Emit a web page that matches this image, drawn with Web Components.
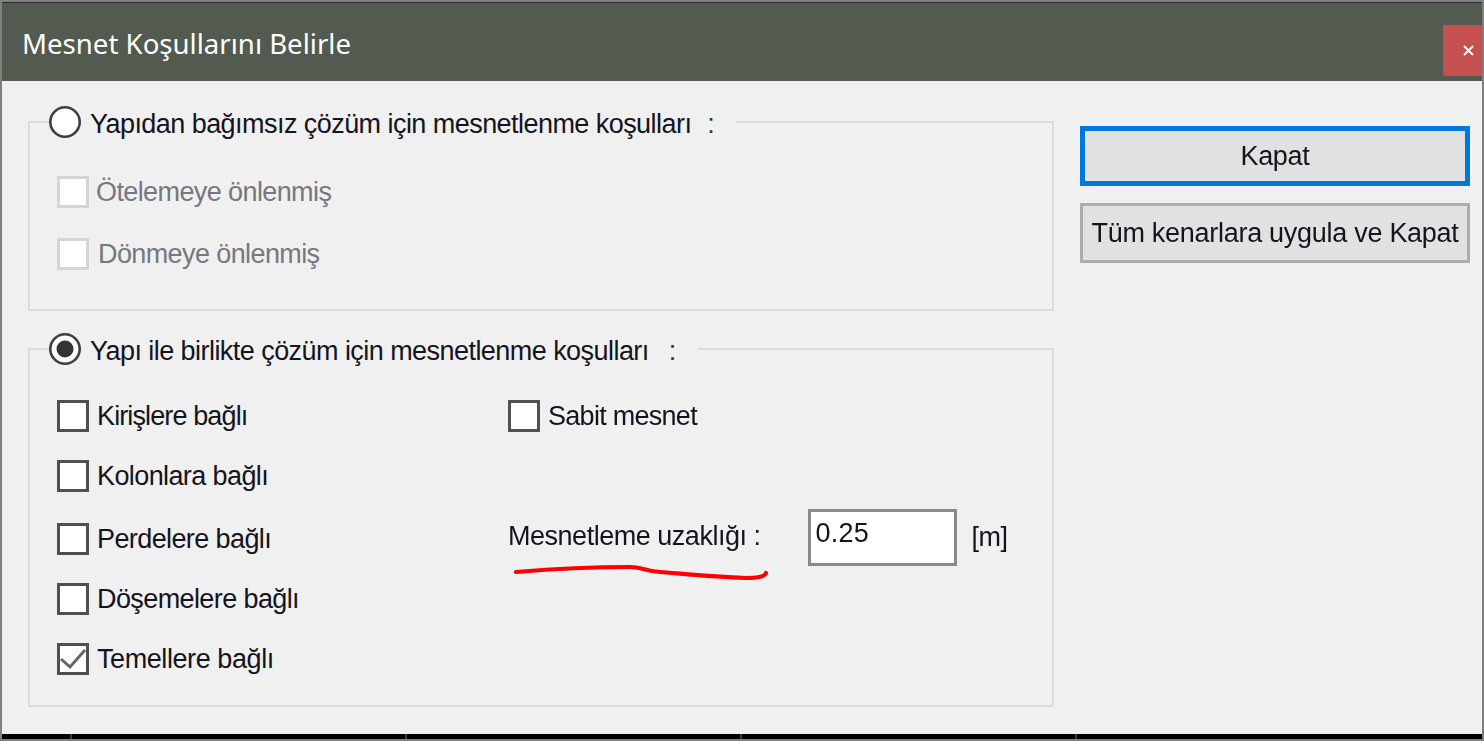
<!DOCTYPE html>
<html lang="tr">
<head>
<meta charset="utf-8">
<title>Mesnet Koşulları</title>
<style>
  html, body { margin: 0; height: 100%; background: #808080; overflow: hidden; }
</style>
</head>
<body>
<app-window>
  <span slot="title">Mesnet Koşullarını Belirle</span>

  <support-group slot="groups" label="Yapıdan bağımsız çözüm için mesnetlenme koşulları" colon-gap="16">
    <div style="display:flex;flex-direction:column;gap:30px;padding:38px 0 39px 0">
      <check-box disabled style="--gap:7px">Ötelemeye önlenmiş</check-box>
      <check-box disabled style="--gap:9px">Dönmeye önlenmiş</check-box>
    </div>
  </support-group>

  <support-group slot="groups" label="Yapı ile birlikte çözüm için mesnetlenme koşulları" colon-gap="20" checked>
    <support-options></support-options>
  </support-group>

  <push-button slot="actions" focused>Kapat</push-button>
  <push-button slot="actions">Tüm kenarlara uygula ve Kapat</push-button>
</app-window>

<script>
const UI_FONT = `"Liberation Sans", Arial, sans-serif`;

class AppWindow extends HTMLElement {
  constructor() {
    super();
    this.attachShadow({ mode: 'open' });
  }

  connectedCallback() {
    this.shadowRoot.innerHTML = `
      <style>
        :host { display: flex; flex-direction: column; height: 741px; box-sizing: border-box; padding: 2px; filter: blur(0.45px); }
        #frame { flex: 1; display: flex; flex-direction: column; border-top: 1px solid #2b2b2b; }
        #titlebar { height: 78px; flex: none; display: flex; justify-content: space-between; align-items: flex-end; background: #535b50; }
        #title { align-self: center; padding: 1px 0 0 20px; color: #fff; font: 27.6px/36px "Noto Sans", sans-serif; }
        #close { width: 39px; height: 51px; margin-bottom: 5px; background: #c55050; color: #fff; display: flex; align-items: center; justify-content: center; }
        #close svg { margin: 0 0 0 11px; }
        #client { flex: 1; display: flex; gap: 26px; align-items: flex-start; padding: 25px 12px 0 26px; background: #f0f0f0; }
        #groups { width: 1026px; flex: none; display: flex; flex-direction: column; gap: 22px; }
        #actions { flex: 1; display: flex; flex-direction: column; gap: 17px; padding-top: 20px; }
        /* black strip along the bottom, with the faint ticks of the window behind */
        #strip { height: 5px; flex: none; background: #000 repeating-linear-gradient(to right, transparent 0 333px, #3c3c3c 333px 335px) -265px 0; }
      </style>
      <div id="frame">
        <div id="titlebar">
          <div id="title"><slot name="title"></slot></div>
          <div id="close"><svg width="11" height="11" viewBox="0 0 11 11"><path d="M1 1l9 9M10 1l-9 9" stroke="#fff" stroke-width="2" fill="none"/></svg></div>
        </div>
        <div id="client">
          <div id="groups"><slot name="groups"></slot></div>
          <div id="actions"><slot name="actions"></slot></div>
        </div>
        <div id="strip"></div>
      </div>
    `;
  }
}

class SupportGroup extends HTMLElement {
  constructor() {
    super();
    this.attachShadow({ mode: 'open' });
  }

  connectedCallback() {
    const dot = this.hasAttribute('checked') ? '<circle cx="16" cy="16" r="8.5" fill="#333"/>' : '';
    this.shadowRoot.innerHTML = `
      <style>
        :host { display: block; font: 27px/32px ${UI_FONT}; letter-spacing: -0.55px; color: #14141f; }
        fieldset { margin: 0; padding: 0 0 0 27px; border: 2px solid #dcdcdc; }
        legend { height: 32px; padding: 0 22px 0 0; margin-left: -8px; display: flex; align-items: center; background: #f0f0f0; }
        svg { flex: none; margin-right: 9px; }
        span { padding-top: 3px; }
        .colon { margin-left: ${this.getAttribute('colon-gap')}px; color: #333; }
      </style>
      <fieldset>
        <legend>
          <svg width="32" height="32" viewBox="0 0 32 32"><circle cx="16" cy="16" r="14.7" fill="#fff" stroke="#3f3f3f" stroke-width="2.6"/>${dot}</svg>
          <span>${this.getAttribute('label')}</span><span class="colon">:</span>
        </legend>
        <slot></slot>
      </fieldset>
    `;
  }
}

class CheckBox extends HTMLElement {
  constructor() {
    super();
    this.attachShadow({ mode: 'open' });
  }

  connectedCallback() {
    const off = this.hasAttribute('disabled');
    const tick = this.hasAttribute('checked') ? '<path d="M4 16l9 8L28 7" fill="none" stroke="#666" stroke-width="3"/>' : '';
    this.shadowRoot.innerHTML = `
      <style>
        :host { display: flex; align-items: center; gap: var(--gap, 8px); height: 32px; font: 27px/32px ${UI_FONT}; letter-spacing: var(--ls, -0.6px); color: ${off ? '#77777f' : '#14141f'}; white-space: nowrap; }
        svg { flex: none; }
      </style>
      <svg width="32" height="32" viewBox="0 0 32 32"><rect x="1.5" y="1.5" width="29" height="29" fill="#fff" stroke="${off ? '#d5d5d5' : '#505050'}" stroke-width="3"/>${tick}</svg>
      <span><slot></slot></span>
    `;
  }
}

class SupportOptions extends HTMLElement {
  constructor() {
    super();
    this.attachShadow({ mode: 'open' });
  }

  connectedCallback() {
    this.shadowRoot.innerHTML = `
      <style>
        :host { display: grid; grid-template-columns: 451px 1fr; height: 340px; padding-top: 35px; box-sizing: border-box; font: 27px/32px ${UI_FONT}; letter-spacing: -0.48px; color: #14141f; }
        #left { display: grid; grid-template-rows: 60px 63px 60px 60px 32px; }
        #right { display: flex; flex-direction: column; gap: 77px; }
        #distance { position: relative; display: flex; align-items: center; white-space: nowrap; }
        #label { padding-bottom: 4px; }
        #value { width: 138px; height: 51px; margin-left: 47px; padding-left: 5px; border: 3px solid #8a8a8a; background: #fff; line-height: 42px; flex: none; letter-spacing: 0.2px; }
        #unit { margin-left: 15px; padding-bottom: 2px; }
        #underline { position: absolute; left: 4px; top: 50px; }
      </style>
      <div id="left">
        <check-box style="--ls:-0.88px">Kirişlere bağlı</check-box>
        <check-box>Kolonlara bağlı</check-box>
        <check-box>Perdelere bağlı</check-box>
        <check-box>Döşemelere bağlı</check-box>
        <check-box checked style="--ls:-0.42px">Temellere bağlı</check-box>
      </div>
      <div id="right">
        <check-box style="--ls:-0.72px">Sabit mesnet</check-box>
        <div id="distance">
          <span id="label">Mesnetleme uzaklığı :</span>
          <div id="value">0.25</div>
          <span id="unit">[m]</span>
          <svg id="underline" width="260" height="24" viewBox="0 0 260 24"><path d="M4 13C40 10 90 8 118 8c12 0 14 4 30 5 25 2 55 5 85 6 10 0 20-1 21-5" fill="none" stroke="#f00" stroke-width="4.2" stroke-linecap="round"/></svg>
        </div>
      </div>
    `;
  }
}

class PushButton extends HTMLElement {
  constructor() {
    super();
    this.attachShadow({ mode: 'open' });
  }

  connectedCallback() {
    const focused = this.hasAttribute('focused');
    this.shadowRoot.innerHTML = `
      <style>
        :host { display: flex; align-items: center; justify-content: center; height: 60px; box-sizing: border-box; border: ${focused ? '5px solid #0078d7' : '3px solid #adadad'}; background: #e1e1e1; font: 27px/32px ${UI_FONT}; letter-spacing: -0.28px; color: #14141f; white-space: nowrap; }
      </style>
      <slot></slot>
    `;
  }
}

customElements.define('app-window', AppWindow);
customElements.define('support-group', SupportGroup);
customElements.define('check-box', CheckBox);
customElements.define('support-options', SupportOptions);
customElements.define('push-button', PushButton);
</script>
</body>
</html>
